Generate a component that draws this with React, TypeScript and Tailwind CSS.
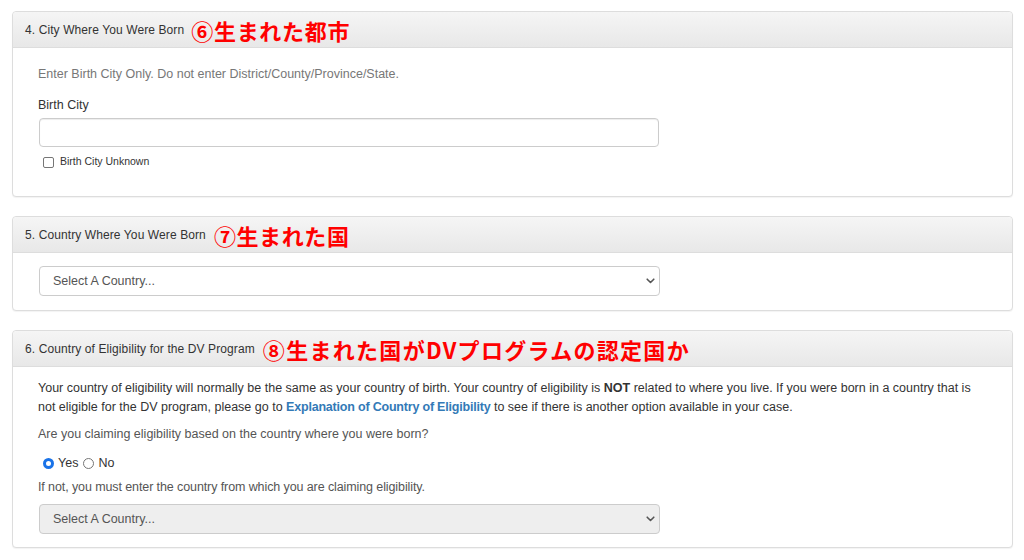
import React from "react";

const jp = { fontFamily: '"Noto Sans CJK JP", "Noto Sans", sans-serif' };

function Chevron() {
  return (
    <svg width="9" height="6" viewBox="0 0 9 6" className="shrink-0">
      <path d="M1.2 1.2 L4.5 4.5 L7.8 1.2" fill="none" stroke="#555" strokeWidth="1.6" strokeLinecap="round" strokeLinejoin="round" />
    </svg>
  );
}

function Header({ label, jpText, tracking, gap }: { label: string; jpText: string; tracking: string; gap: string }) {
  return (
    <div className="h-[36px] flex items-center px-[12px] border-b border-[#dddddd] bg-gradient-to-b from-[#f5f5f5] to-[#e8e8e8] rounded-t-[4px]">
      <span className="text-[12px] tracking-[0.1px] text-[#333333]">{label}</span>
      <span className={`${gap} text-[22px] leading-none font-bold text-[#ff0000] ${tracking}`} style={jp}>
        {jpText}
      </span>
    </div>
  );
}

function SelectBox({ disabled }: { disabled?: boolean }) {
  return (
    <div
      className={`w-[621px] h-[30px] ml-[1px] flex items-center justify-between pl-[13px] pr-[4px] border border-[#cccccc] rounded-[4px] text-[12.5px] text-[#555555] ${
        disabled ? "bg-[#eeeeee]" : "bg-white"
      }`}
    >
      <span>Select A Country...</span>
      <Chevron />
    </div>
  );
}

export default function App() {
  return (
    <div
      className="w-[1024px] h-[560px] bg-white pt-[11px] pl-[12px] overflow-hidden"
      style={{ fontFamily: '"Liberation Sans", Arial, sans-serif' }}
    >
      <div className="w-[1001px] flex flex-col gap-[19px]">
        {/* Panel 4 */}
        <div className="border border-[#dddddd] rounded-[4px] shadow-[0_1px_1px_rgba(0,0,0,0.05)] bg-white">
          <Header label="4. City Where You Were Born" jpText="⑥生まれた都市" tracking="tracking-[0.7px]" gap="ml-[7px]" />
          <div className="pt-[18px] pb-[26px] px-[25px]">
            <p className="text-[12.5px] leading-[17px] text-[#777777]">
              Enter Birth City Only. Do not enter District/County/Province/State.
            </p>
            <div className="mt-[14px] text-[12.5px] leading-[17px] text-[#333333]">Birth City</div>
            <div className="mt-[4px] ml-[1px] w-[620px] h-[29px] border border-[#cccccc] rounded-[4px] shadow-[inset_0_1px_1px_rgba(0,0,0,0.075)] bg-white" />
            <div className="mt-[7px] h-[16px] flex items-center pl-[5px]">
              <span className="w-[11px] h-[11px] border border-[#767676] rounded-[2px] bg-white" />
              <span className="ml-[6px] text-[10.5px] text-[#333333]">Birth City Unknown</span>
            </div>
          </div>
        </div>

        {/* Panel 5 */}
        <div className="border border-[#dddddd] rounded-[4px] shadow-[0_1px_1px_rgba(0,0,0,0.05)] bg-white">
          <Header label="5. Country Where You Were Born" jpText="⑦生まれた国" tracking="tracking-[0.6px]" gap="ml-[8px]" />
          <div className="pt-[13px] pb-[14px] px-[25px]">
            <SelectBox />
          </div>
        </div>

        {/* Panel 6 */}
        <div className="border border-[#dddddd] rounded-[4px] shadow-[0_1px_1px_rgba(0,0,0,0.05)] bg-white">
          <Header
            label="6. Country of Eligibility for the DV Program"
            jpText="⑧生まれた国がDVプログラムの認定国か"
            tracking="tracking-[1.3px]"
            gap="ml-[8px]"
          />
          <div className="pt-[12px] pb-[13px] px-[25px]">
            <p className="text-[12.5px] leading-[19px] text-[#333333]">
              Your country of eligibility will normally be the same as your country of birth. Your country of
              eligibility is <b>NOT</b> related to where you live. If you were born in a country that is
              <br />
              not eligible for the DV program, please go to{" "}
              <b className="text-[#337ab7] tracking-[-0.2px]">Explanation of Country of Eligibility</b> to see if
              there is another option available in your case.
            </p>
            <p className="mt-[8px] text-[12.5px] leading-[19px] text-[#555555]">
              Are you claiming eligibility based on the country where you were born?
            </p>
            <div className="mt-[10px] h-[19px] flex items-center pl-[5px] text-[12.5px] text-[#333333]">
              <span className="w-[11px] h-[11px] rounded-full border-[3px] border-[#1a73e8] bg-white" />
              <span className="ml-[4px]">Yes</span>
              <span className="ml-[5px] w-[11px] h-[11px] rounded-full border border-[#767676] bg-white" />
              <span className="ml-[4px]">No</span>
            </div>
            <p className="mt-[5px] text-[12.5px] leading-[19px] text-[#555555] tracking-[-0.1px]">
              If not, you must enter the country from which you are claiming eligibility.
            </p>
            <div className="mt-[7px]">
              <SelectBox disabled />
            </div>
          </div>
        </div>
      </div>
    </div>
  );
}
